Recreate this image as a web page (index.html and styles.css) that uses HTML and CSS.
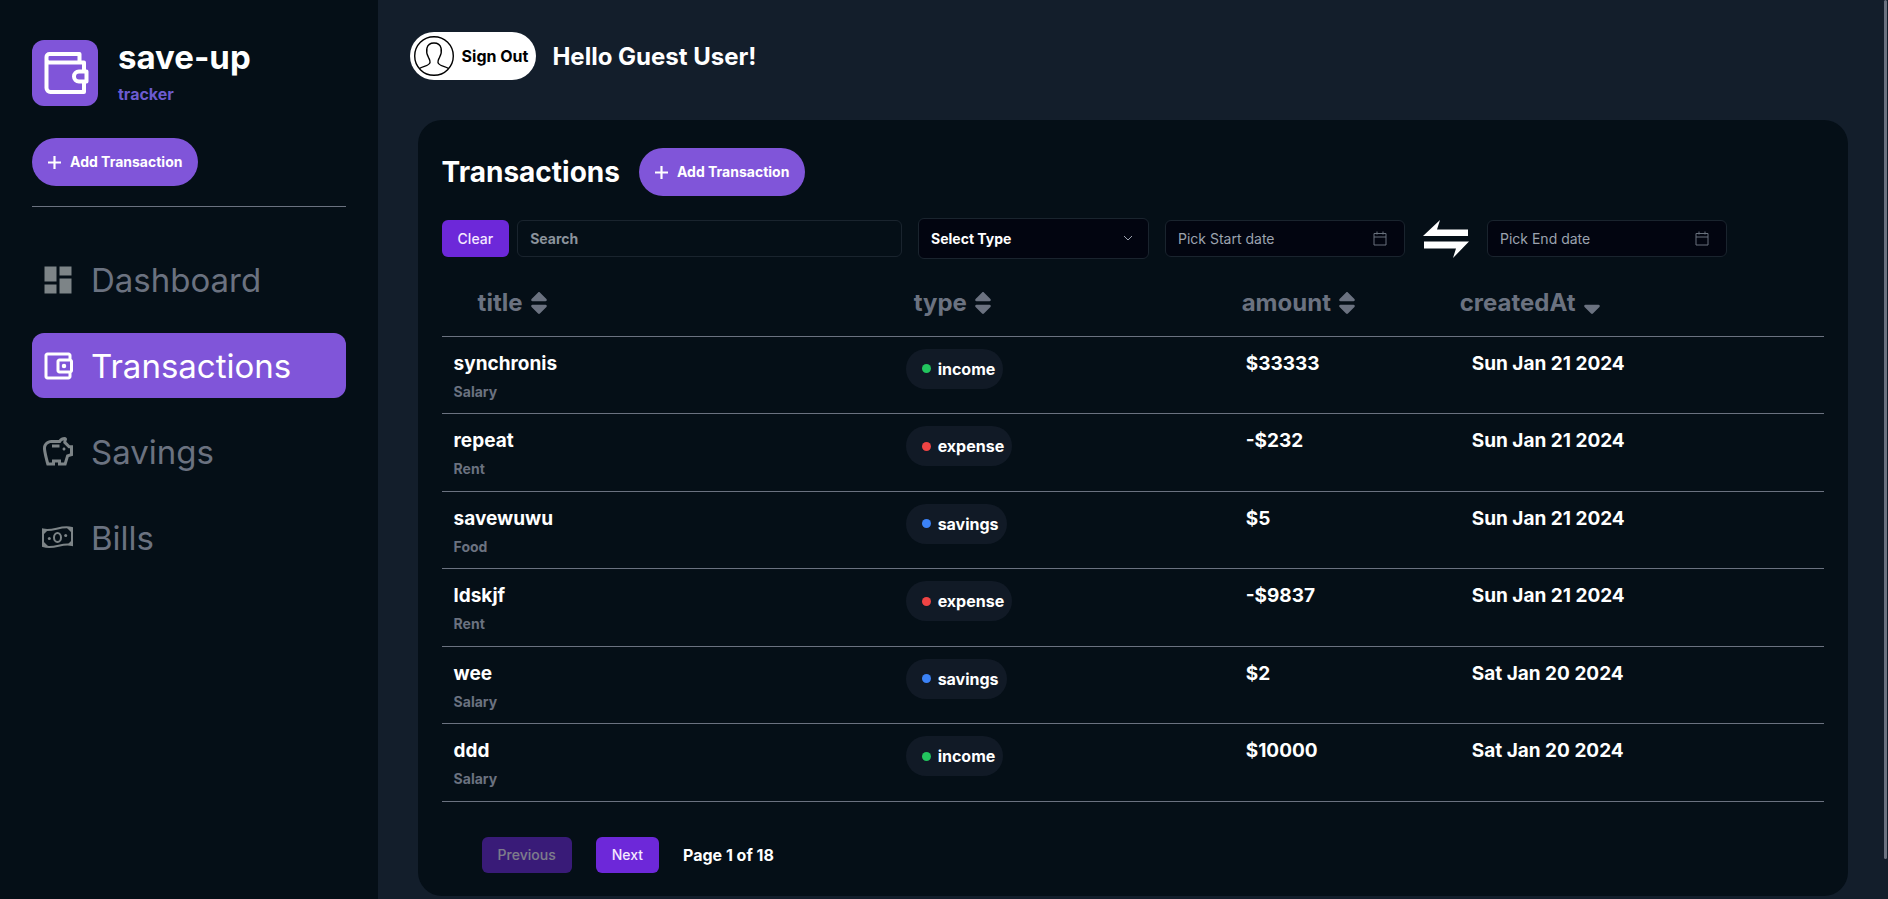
FILE: index.html
```html
<!DOCTYPE html>
<html lang="en">
<head>
<meta charset="utf-8">
<meta name="viewport" content="width=device-width, initial-scale=1">
<title>save-up tracker</title>
<link rel="stylesheet" href="styles.css">
</head>
<body>
<svg class="sprite" aria-hidden="true">
  <symbol id="sort" viewBox="0 0 320 512"><path d="M41 288h238c21.400 0 32.100 25.900 17 41L177 448c-9.400 9.400-24.600 9.400-33.900 0L24 329c-15.100-15.100-4.400-41 17-41zm255-105L177 64c-9.400-9.400-24.600-9.400-33.900 0L24 183c-15.100 15.100-4.400 41 17 41h238c21.400 0 32.100-25.900 17-41z"/></symbol>
  <symbol id="sort-down" viewBox="0 0 320 512"><path d="M41 288h238c21.400 0 32.100 25.900 17 41L177 448c-9.400 9.400-24.600 9.400-33.900 0L24 329c-15.100-15.100-4.400-41 17-41z"/></symbol>
  <symbol id="plus" viewBox="0 0 12 12"><path d="M6 0v12M0 6h12" fill="none" stroke="currentColor" stroke-width="2"/></symbol>
  <symbol id="calendar" viewBox="0 0 14 15"><path d="M1 2.500h12v11.500H1zM1 6h12M4 .5v3M10 .5v3" fill="none" stroke="currentColor" stroke-linejoin="round"/></symbol>
</svg>
<div class="app">
  <aside class="sidebar">
    <div class="brand">
      <div class="logo">
        <svg class="outline" viewBox="0 0 66 66" stroke-width="4" stroke-linejoin="round"><path d="M52 31v-8.500H17a3 3 0 0 1-2.500-3V17a3 3 0 0 1 3-3H47.500v8M14.500 18v30a4 4 0 0 0 4 4H52V42M54.500 31.500H47a5 5 0 0 0 0 10h7.500z"/></svg>
      </div>
      <div>
        <h1 class="brand-name">save-up</h1>
        <p class="brand-sub">tracker</p>
      </div>
    </div>
    <button class="add" type="button"><svg><use href="#plus"/></svg>Add Transaction</button>
    <hr class="divider">
    <nav class="nav">
      <a href="#"><svg viewBox="0 0 24 24"><path d="M3 13h8V3H3v10zm0 8h8v-6H3v6zm10 0h8V11h-8v10zm0-18v6h8V3h-8z"/></svg>Dashboard</a>
      <a href="#" class="active" aria-current="page"><svg viewBox="0 0 24 24"><path d="M21 7.280V5c0-1.100-.9-2-2-2H5c-1.110 0-2 .9-2 2v14c0 1.100.89 2 2 2h14c1.100 0 2-.9 2-2v-2.280c.59-.35 1-.98 1-1.720V9c0-.74-.41-1.370-1-1.720zM20 9v6h-7V9h7zM5 19V5h14v2h-6c-1.100 0-2 .9-2 2v6c0 1.100.9 2 2 2h6v2H5z"/><circle cx="16" cy="12" r="1.500"/></svg>Transactions</a>
      <a href="#"><svg viewBox="0 0 24 24"><path d="M15 10c0-.55.45-1 1-1s1 .45 1 1-.45 1-1 1-1-.45-1-1zM8 9h5V7H8v2zm14-1.500v6.970l-2.820.94L17.500 21H12v-2h-2v2H4.500C4.500 21 2 12.540 2 9.500S4.460 4 7.500 4h5c.91-1.210 2.360-2 4-2 .83 0 1.500.67 1.500 1.500 0 .21-.04.4-.12.58-.14.34-.26.73-.32 1.150l2.270 2.270H22zM20 9.500h-1L15.500 6c0-.65.09-1.290.26-1.910-.97.25-1.760.97-2.090 1.910H7.500C5.570 6 4 7.570 4 9.500c0 1.880 1.220 6.650 2.010 9.500H8v-2h6v2h2.010l1.550-5.150 2.440-.82V9.500z"/></svg>Savings</a>
      <a href="#"><svg viewBox="0 0 36 36"><g fill="none" stroke="currentColor" stroke-width="2"><path d="M3 9.500C13 12 21 5 32 8v17C22 22 14 30 3 26z"/><ellipse cx="17.500" cy="17.500" rx="3.500" ry="4.500"/></g><circle cx="9.300" cy="18.500" r="1.500"/><circle cx="25.700" cy="15.500" r="1.500"/><path d="M3 10h5L3 15zM32 8h-5l5 5zM3 26h5l-5-5zM32 25h-5l5-5z"/></svg>Bills</a>
    </nav>
  </aside>
  <main class="main">
    <header class="topbar">
      <button class="signout" type="button">
        <svg class="outline" viewBox="0 0 40 40" stroke-width="1.400"><circle cx="20" cy="20" r="19.300"/><path d="M5.500 32.500c3-2.500 10-2.500 10.500-6 .3-2-.5-3-1.500-5C11.500 16 11.500 7 20 7s8.500 9 5.500 14.500c-1 2-1.800 3-1.500 5 .5 3.500 7.500 3.500 10.500 6"/></svg>Sign Out</button>
      <h2 class="hello">Hello Guest User!</h2>
    </header>
    <section class="card">
      <div class="card-head">
        <h2>Transactions</h2>
        <button class="add" type="button"><svg><use href="#plus"/></svg>Add Transaction</button>
      </div>
      <form class="filters">
        <button class="btn" type="button">Clear</button>
        <input class="field search" type="text" placeholder="Search" aria-label="Search">
        <div class="select">
          <select class="field" aria-label="Select Type"><option>Select Type</option><option>income</option><option>expense</option><option>savings</option></select>
          <svg viewBox="0 0 10 6"><path d="M1 1l4 4 4-4" fill="none" stroke="currentColor"/></svg>
        </div>
        <div class="date"><input class="field" type="text" placeholder="Pick Start date" aria-label="Pick Start date"><svg><use href="#calendar"/></svg></div>
        <svg class="swap" viewBox="0 0 46 38"><path d="M0 16L17 0l-3 9.500h31V16zM1 21.500h45L30 38l3-9.500H1z"/></svg>
        <div class="date"><input class="field" type="text" placeholder="Pick End date" aria-label="Pick End date"><svg><use href="#calendar"/></svg></div>
      </form>
      <table class="table">
        <colgroup><col class="c-title"><col class="c-type"><col class="c-amount"><col></colgroup>
        <thead><tr>
          <th class="h-title"><button type="button">title<svg><use href="#sort"/></svg></button></th>
          <th class="h-type"><button type="button">type<svg><use href="#sort"/></svg></button></th>
          <th class="h-amount"><button type="button">amount<svg><use href="#sort"/></svg></button></th>
          <th><button type="button">createdAt<svg><use href="#sort-down"/></svg></button></th>
        </tr></thead>
        <tbody>
          <tr><td>synchronis<small>Salary</small></td><td><span class="chip income">income</span></td><td>$33333</td><td>Sun Jan 21 2024</td></tr>
          <tr><td>repeat<small>Rent</small></td><td><span class="chip expense">expense</span></td><td>-$232</td><td>Sun Jan 21 2024</td></tr>
          <tr><td>savewuwu<small>Food</small></td><td><span class="chip savings">savings</span></td><td>$5</td><td>Sun Jan 21 2024</td></tr>
          <tr><td>ldskjf<small>Rent</small></td><td><span class="chip expense">expense</span></td><td>-$9837</td><td>Sun Jan 21 2024</td></tr>
          <tr><td>wee<small>Salary</small></td><td><span class="chip savings">savings</span></td><td>$2</td><td>Sat Jan 20 2024</td></tr>
          <tr><td>ddd<small>Salary</small></td><td><span class="chip income">income</span></td><td>$10000</td><td>Sat Jan 20 2024</td></tr>
        </tbody>
      </table>
      <div class="pager">
        <button class="btn" type="button" disabled>Previous</button>
        <button class="btn" type="button">Next</button>
        <span>Page 1 of 18</span>
      </div>
    </section>
    <div class="scroll-thumb"></div>
  </main>
</div>
</body>
</html>
```
FILE: styles.css
```css
* { box-sizing: border-box; margin: 0; }
body {
  font-family: Inter, "Liberation Sans", sans-serif;
  font-size: 16px;
  line-height: 24px;
  color: #fff;
  background: #131e2b;
}
button, input, select { font: inherit; color: inherit; }
button { border: 0; cursor: pointer; white-space: nowrap; }
svg { fill: currentColor; flex: none; }
.outline { fill: none; stroke: currentColor; }
.sprite { position: absolute; width: 0; height: 0; }

.app { display: flex; min-height: 100vh; }
.sidebar { flex: none; width: 20%; padding: 40px 32px; background: #050f17; }
.brand { display: flex; gap: 20px; }
.logo { width: 66px; height: 66px; border-radius: 12px; background: #8055d9; }
.logo svg { display: block; }
.brand-name { font-size: 33px; line-height: 35px; font-weight: 700; }
.brand-sub { margin-top: 7px; font-weight: 700; color: #6c5bd0; }
.sidebar .add { margin-top: 32px; }
.add {
  display: flex; align-items: center; gap: 9px;
  height: 48px; padding: 0 16px; border-radius: 24px;
  background: #8055d9; font-size: 14px; font-weight: 700;
}
.add svg { width: 13px; height: 13px; }
.divider { margin: 20px 0 40px; border: 0; border-top: 1px solid #6b7280; }
.nav { display: flex; flex-direction: column; gap: 21px; }
.nav a {
  display: flex; align-items: center; gap: 15px;
  height: 65px; padding: 0 8px; border-radius: 12px;
  font-size: 33px; font-weight: 400; color: #6b7280; text-decoration: none;
}
.nav svg { width: 36px; height: 36px; color: #7d8487; }
.nav .active, .nav .active svg { color: #fff; }
.nav .active { background: #8055d9; }

.main { position: relative; flex: 1; padding: 32px 40px 3px; }
.topbar { display: flex; align-items: center; gap: 16px; margin-left: -8px; }
.signout {
  display: flex; align-items: center; gap: 8px;
  height: 48px; padding: 0 8px 0 4px; border-radius: 24px;
  background: #fff; color: #000; font-weight: 700;
}
.signout svg { width: 40px; height: 40px; }
.hello { padding-top: 1px; font-size: 24px; line-height: 32px; font-weight: 700; }
.scroll-thumb {
  position: absolute; top: 0; right: 1px; width: 3px; height: 859px;
  border-radius: 2px; background: #6b7280;
}

.card { margin-top: 40px; padding: 28px 24px 23px; border-radius: 24px; background: #050f17; }
.card-head { display: flex; align-items: center; gap: 19px; }
.card-head h2 { font-size: 28px; line-height: 36px; font-weight: 700; }
.filters { display: flex; align-items: center; gap: 16px; margin-top: 22px; padding-right: 97px; }
.btn {
  height: 37px; padding: 0 16px; border-radius: 6px;
  background: #6d28d9; color: #f5e9ff; font-size: 14px; font-weight: 500;
}
.btn:disabled { opacity: .5; }
.field {
  width: 100%; height: 37px; padding: 0 12px; border: 1px solid #1a242e; border-radius: 6px;
  background: #020510; font-size: 14px; outline: 0;
}
.field::placeholder { color: #9ca3af; opacity: 1; }
.search { flex: 1; margin-left: -8px; background: transparent; font-weight: 700; }
.search::placeholder { color: #8b939c; }
.select, .date { position: relative; flex: 0 1 240px; }
.select { flex-basis: 231px; }
.select .field { display: block; height: 41px; appearance: none; font-weight: 700; }
.select svg { position: absolute; right: 16px; top: 17px; width: 10px; height: 6px; color: #9ca3af; }
.date .field { display: block; }
.date svg { position: absolute; right: 18px; top: 11px; width: 14px; height: 15px; color: #68717c; }
.swap { width: 46px; height: 38px; margin: 0 2px; }

.table { width: 100%; height: 543px; table-layout: fixed; border-collapse: collapse; font-weight: 700; }
.c-title { width: 32.700%; }
.c-type { width: 24.600%; }
.c-amount { width: 16.350%; }
.table tr { border-bottom: 1px solid #6b7280; }
.table th { height: 77px; padding: 12px 0 0; text-align: left; }
.table th button {
  display: flex; align-items: center; gap: 7px; padding: 0;
  background: none; color: #6b7280; font-size: 24px; font-weight: 700;
}
.table th svg { width: 18px; height: 28px; }
.table .h-title { padding-left: 36px; }
.table .h-type { padding-left: 20px; }
.table .h-amount { padding-left: 8px; }
.table td { padding: 12px 12px 10px; vertical-align: top; font-size: 19px; line-height: 30px; }
.table small { display: block; margin-top: 3px; font-size: 14px; line-height: 20px; color: #6b7280; }
.chip {
  display: inline-flex; align-items: center; gap: 7px;
  height: 40px; padding: 0 8px 0 16px; border-radius: 20px;
  background: #111a26; font-size: 16px;
}
.chip::before { content: ""; width: 9px; height: 9px; border-radius: 50%; background: currentColor; }
.income::before { background: #22c55e; }
.expense::before { background: #ef4444; }
.savings::before { background: #3b82f6; }
.pager { display: flex; align-items: center; gap: 24px; margin-top: 35px; padding-left: 40px; font-weight: 700; }
.pager .btn { height: 36px; }
```
